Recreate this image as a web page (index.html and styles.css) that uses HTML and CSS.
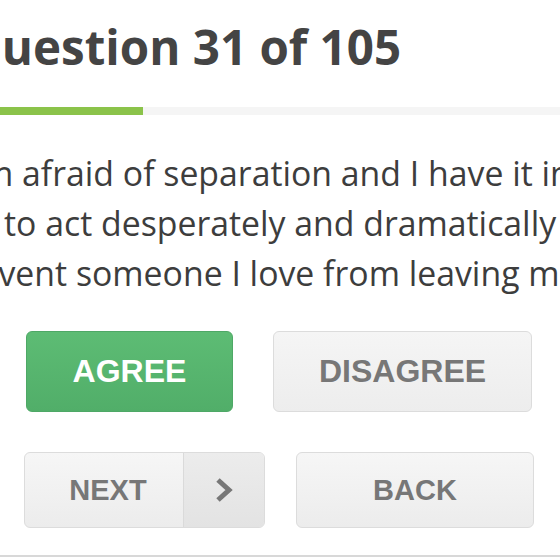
FILE: index.html
```html
<!DOCTYPE html>
<html lang="en">
<head>
<meta charset="utf-8">
<title>Question 31 of 105</title>
<link rel="stylesheet" href="styles.css">
</head>
<body>
<div class="page">
  <h1 class="title">Question 31 of 105</h1>
  <div class="progress"><div class="progress-fill" style="width:143px"></div></div>
  <p class="question">I am afraid of separation and I have it in<br>me to act desperately and dramatically to<br>prevent someone I love from leaving me.</p>
  <div class="row row-answers">
    <button class="btn btn-agree">AGREE</button>
    <button class="btn btn-disagree">DISAGREE</button>
  </div>
  <div class="row row-nav">
    <button class="btn btn-next"><span class="next-label">NEXT</span><span class="next-arrow"><svg width="18" height="26" viewBox="0 0 18 26"><path d="M3 3 L14 13 L3 23" fill="none" stroke="#777" stroke-width="5" stroke-linejoin="miter"/></svg></span></button>
    <button class="btn btn-back">BACK</button>
  </div>
  <div class="bottom-line"></div>
</div>
</body>
</html>
```
FILE: styles.css
```css
html, body {
  margin: 0;
  padding: 0;
  background: #fff;
}
.page {
  width: 560px;
  height: 560px;
  overflow: hidden;
  position: relative;
}
.title {
  margin: 17px 0 0 -36px;
  font-family: "Open Sans", sans-serif;
  font-weight: 700;
  font-size: 47.5px;
  line-height: 60px;
  color: #444;
  white-space: nowrap;
}
.progress {
  margin-top: 30px;
  height: 8px;
  background: #f5f5f5;
}
.progress-fill {
  height: 8px;
  background: #8bc34a;
}
.question {
  margin: 33px 0 0 -55px;
  text-align: left;
  font-family: "Open Sans", sans-serif;
  font-size: 33.8px;
  line-height: 50px;
  color: #3d3d3d;
  white-space: nowrap;
}
.row {
  display: flex;
}
.row-answers {
  margin-top: 33px;
  padding-left: 26px;
  gap: 40px;
}
.row-nav {
  margin-top: 40px;
  padding-left: 24px;
  gap: 31px;
}
.btn {
  box-sizing: border-box;
  font-family: "Liberation Sans", Arial, sans-serif;
  font-weight: 700;
  border-radius: 6px;
  padding: 0;
  margin: 0;
  cursor: pointer;
}
.btn-agree {
  width: 207px;
  height: 81px;
  font-size: 32px;
  color: #fff;
  background: linear-gradient(#5dbc74, #51ae69);
  border: 1px solid #4ea866;
}
.btn-disagree {
  width: 259px;
  height: 81px;
  font-size: 32px;
  color: #777;
  background: linear-gradient(#f5f5f5, #ededed);
  border: 1px solid #dcdcdc;
}
.btn-next {
  width: 241px;
  height: 76px;
  display: flex;
  align-items: stretch;
  font-size: 29px;
  color: #777;
  background: linear-gradient(#f6f6f6, #ececec);
  border: 1px solid #dcdcdc;
  overflow: hidden;
}
.next-label {
  width: 159px;
  padding-left: 8px;
  box-sizing: border-box;
  display: flex;
  align-items: center;
  justify-content: center;
  border-right: 1px solid #dadada;
}
.next-arrow {
  flex: 1;
  display: flex;
  align-items: center;
  justify-content: center;
  background: linear-gradient(#ececec, #e3e3e3);
}
.btn-back {
  width: 238px;
  height: 76px;
  font-size: 29px;
  color: #777;
  background: linear-gradient(#f6f6f6, #ececec);
  border: 1px solid #dcdcdc;
}
.bottom-line {
  margin-top: 27px;
  height: 2px;
  background: #d8d8d8;
}
```
